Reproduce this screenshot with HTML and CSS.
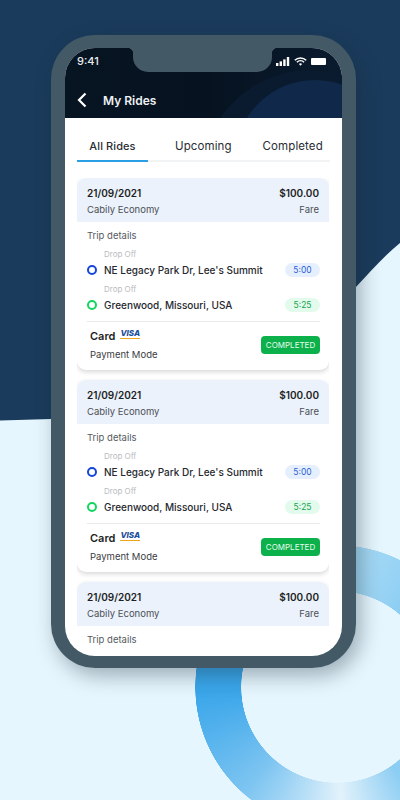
FILE: index.html
```html
<!DOCTYPE html>
<html lang="en">
<head>
  <meta charset="UTF-8" />
  <title>My Rides</title>
  <link rel="stylesheet" href="styles.css">
</head>
<body>

  <svg class="backdrop" width="400" height="800" viewBox="0 0 400 800">
    <path d="M0 0H400V243C385 255 370 272 356 287C300 345 200 419 51 419L0 420.5Z" fill="#1b3b5c" />
  </svg>
  <div class="ring"></div>

  <div class="phone">
    <div class="screen">
      <div class="notch"></div>

      <header class="app-header">
        <svg class="header-art" width="277" height="70" viewBox="0 0 277 70">
          <circle cx="245" cy="130" r="108" fill="#0a1b2f" />
          <circle cx="250" cy="112" r="80" fill="#10294a" />
        </svg>
        <div class="status-bar">
          <span class="clock">9:41</span>
          <span class="status-icons">
            <svg width="14" height="9" viewBox="0 0 14 9" fill="#fff">
              <rect x="0" y="6" width="2.4" height="3" />
              <rect x="3.6" y="4.4" width="2.4" height="4.6" />
              <rect x="7.2" y="2.4" width="2.4" height="6.6" />
              <rect x="10.8" y="0" width="2.4" height="9" />
            </svg>
            <svg width="13" height="9" viewBox="0 0 13 9" fill="none" stroke="#fff" stroke-width="1.5">
              <path d="M.8 3.2a8.2 8.2 0 0 1 11.4 0" />
              <path d="M2.9 5.2a5.2 5.2 0 0 1 7.2 0" />
              <path d="M6.5 8.8 4.9 7a2.3 2.3 0 0 1 3.2 0Z" fill="#fff" stroke="none" />
            </svg>
            <span class="battery"></span>
          </span>
        </div>
        <div class="title-row">
          <svg width="10" height="16" viewBox="0 0 10 16" fill="none" stroke="#fff" stroke-width="2.2">
            <path d="M8.5 1.5 2 8l6.5 6.5" />
          </svg>
          <h1>My Rides</h1>
        </div>
      </header>

      <nav class="tabs">
        <a class="tab active">All Rides</a>
        <a class="tab">Upcoming</a>
        <a class="tab">Completed</a>
      </nav>

      <div class="ride-list">
        <section class="ride-card">
          <div class="ride-head">
            <div class="head-row"><strong>21/09/2021</strong><strong>$100.00</strong></div>
            <div class="head-row sub"><span>Cabily Economy</span><span>Fare</span></div>
          </div>
          <div class="ride-body">
            <p class="trip-title">Trip details</p>
            <div class="stop">
              <span class="drop-label">Drop Off</span>
              <div class="stop-row">
                <i class="dot dot-blue"></i>
                <span class="address">NE Legacy Park Dr, Lee's Summit</span>
                <span class="time time-blue">5:00</span>
              </div>
            </div>
            <div class="stop">
              <span class="drop-label">Drop Off</span>
              <div class="stop-row">
                <i class="dot dot-green"></i>
                <span class="address">Greenwood, Missouri, USA</span>
                <span class="time time-green">5:25</span>
              </div>
            </div>
            <div class="pay-row">
              <div>
                <div class="card-line"><b>Card</b><span class="visa">VISA</span></div>
                <div class="pay-mode">Payment Mode</div>
              </div>
              <span class="status-badge">COMPLETED</span>
            </div>
          </div>
        </section>

        <section class="ride-card">
          <div class="ride-head">
            <div class="head-row"><strong>21/09/2021</strong><strong>$100.00</strong></div>
            <div class="head-row sub"><span>Cabily Economy</span><span>Fare</span></div>
          </div>
          <div class="ride-body">
            <p class="trip-title">Trip details</p>
            <div class="stop">
              <span class="drop-label">Drop Off</span>
              <div class="stop-row">
                <i class="dot dot-blue"></i>
                <span class="address">NE Legacy Park Dr, Lee's Summit</span>
                <span class="time time-blue">5:00</span>
              </div>
            </div>
            <div class="stop">
              <span class="drop-label">Drop Off</span>
              <div class="stop-row">
                <i class="dot dot-green"></i>
                <span class="address">Greenwood, Missouri, USA</span>
                <span class="time time-green">5:25</span>
              </div>
            </div>
            <div class="pay-row">
              <div>
                <div class="card-line"><b>Card</b><span class="visa">VISA</span></div>
                <div class="pay-mode">Payment Mode</div>
              </div>
              <span class="status-badge">COMPLETED</span>
            </div>
          </div>
        </section>

        <section class="ride-card">
          <div class="ride-head">
            <div class="head-row"><strong>21/09/2021</strong><strong>$100.00</strong></div>
            <div class="head-row sub"><span>Cabily Economy</span><span>Fare</span></div>
          </div>
          <div class="ride-body">
            <p class="trip-title">Trip details</p>
          </div>
        </section>
      </div>
    </div>
  </div>

</body>
</html>
```

FILE: styles.css
```css
html, body {
  height: 100%;
}

body {
  font-family: 'Inter', 'Liberation Sans', sans-serif;
  background-color: #e6f6fe;
  color: #1d1f24;
  margin: 0;
  width: 400px;
  height: 800px;
  overflow: hidden;
  position: relative;
}

.backdrop {
  position: absolute;
  top: 0;
  left: 0;
}

/* ring centre is at 142px 142px of this box, the box stops at the frame edge */
.ring {
  position: absolute;
  top: 545px;
  left: 195px;
  width: 205px;
  height: 255px;
  background: conic-gradient(at 142px 142px, #a8dbf6 8deg, #8ccdf3 40deg, #8ccdf3 145deg, #e2f2fb 178deg, #7cc4f1 222deg, #3aa6ea 268deg, #3aa6ea 340deg, #a8dbf6 368deg);
  -webkit-mask: radial-gradient(circle at 142px 142px, transparent 95.5px, #000 96px, #000 141.5px, transparent 142px);
  mask: radial-gradient(circle at 142px 142px, transparent 95.5px, #000 96px, #000 141.5px, transparent 142px);
}

.phone {
  position: relative;
  box-sizing: border-box;
  width: 305px;
  height: 633px;
  margin: 35px 0 0 51px;
  padding: 13px 14px 12px;
  background-color: #435a66;
  border-radius: 44px;
  box-shadow: 5px 8px 20px rgba(20, 40, 55, 0.35);
}

.screen {
  position: relative;
  display: flex;
  flex-direction: column;
  height: 100%;
  background-color: #fff;
  border-radius: 30px;
  overflow: hidden;
}

.notch {
  position: absolute;
  top: 0;
  left: 68px;
  z-index: 2;
  width: 139px;
  height: 24px;
  background-color: #435a66;
  border-radius: 0 0 15px 15px;
}

/* little flares where the notch meets the bezel */
.notch::before,
.notch::after {
  content: '';
  position: absolute;
  top: 0;
  width: 6px;
  height: 6px;
}

.notch::before {
  left: -6px;
  background: radial-gradient(circle at 0 100%, transparent 6px, #435a66 6.5px);
}

.notch::after {
  right: -6px;
  background: radial-gradient(circle at 100% 100%, transparent 6px, #435a66 6.5px);
}

.app-header {
  position: relative;
  flex: 0 0 70px;
  background: linear-gradient(90deg, #071421, #06121f 50%, #0a1b2e);
  color: #fff;
}

.header-art {
  position: absolute;
  top: 0;
  left: 0;
}

.status-bar {
  position: relative;
  display: flex;
  justify-content: space-between;
  align-items: center;
  height: 26px;
  padding: 0 16px 0 12px;
}

.clock {
  font-size: 11px;
  font-weight: 500;
  color: #e8ecef;
}

.status-icons {
  display: flex;
  align-items: center;
  gap: 4px;
}

.battery {
  width: 15px;
  height: 7px;
  background-color: #fff;
  border-radius: 1px;
}

.title-row {
  position: relative;
  display: flex;
  align-items: center;
  gap: 16px;
  padding: 18px 0 0 12px;
}

h1 {
  margin: 0;
  font-size: 12px;
  font-weight: 600;
  color: #eef1f4;
}

.tabs {
  flex: none;
  display: flex;
  margin: 18px 12px 0;
  border-bottom: 2px solid #f2f3f5;
}

.tab {
  margin-bottom: -2px;
  padding: 3px 0 7px;
  font-size: 11.5px;
  letter-spacing: 0.1px;
  line-height: 14px;
  color: #2a2d33;
}

.tab:nth-child(2) {
  margin-right: 31px;
}

.tab.active {
  width: 71px;
  margin-right: 27px;
  box-sizing: border-box;
  text-align: center;
  font-size: 11px;
  font-weight: 500;
  border-bottom: 2px solid #2a9fe6;
}

.ride-list {
  flex: 1;
  min-height: 0;
  margin: 16px 13px 10px 12px;
  overflow: hidden;
  display: flex;
  flex-direction: column;
  gap: 11px;
}

.ride-card {
  flex: none;
  margin: 0 0 -1px;
  background-color: #fff;
  border-radius: 9px;
  box-shadow: 0 2px 5px rgba(0, 0, 0, 0.16);
  overflow: hidden;
}

.ride-head {
  box-sizing: border-box;
  height: 44px;
  padding: 8px 10px 0;
  background-color: #ebf2fb;
}

.head-row {
  display: flex;
  justify-content: space-between;
  font-size: 10px;
  line-height: 14px;
}

.head-row strong {
  font-weight: 600;
}

.head-row.sub {
  margin-top: 3px;
  font-size: 9.5px;
  color: #4b4f57;
}

.ride-body {
  padding: 7px 9px 0 10px;
}

.trip-title {
  margin: 0 0 5px;
  font-size: 9.5px;
  line-height: 14px;
  color: #555a62;
}

.stop {
  height: 35px;
}

.drop-label {
  display: block;
  padding-left: 17px;
  font-size: 8px;
  line-height: 12px;
  color: #b9bcc1;
}

.stop-row {
  display: flex;
  align-items: center;
  margin-top: 2px;
  height: 16px;
}

.dot {
  box-sizing: border-box;
  flex: none;
  width: 10px;
  height: 10px;
  margin-right: 7px;
  border-radius: 50%;
  border: 2.4px solid;
}

.dot-blue {
  border-color: #1646d8;
}

.dot-green {
  border-color: #12d65f;
}

.address {
  flex: 1;
  font-size: 10px;
  font-weight: 500;
  color: #26282e;
}

.time {
  width: 35px;
  height: 14px;
  border-radius: 7px;
  font-size: 8.5px;
  line-height: 14px;
  text-align: center;
}

.time-blue {
  background-color: #e6effd;
  color: #2a5fd8;
}

.time-green {
  background-color: #e3fbec;
  color: #17a34f;
}

.pay-row {
  display: flex;
  justify-content: space-between;
  align-items: flex-start;
  margin-top: 3px;
  padding: 7px 0 8px 3px;
  border-top: 1px solid #e8e9eb;
}

.card-line {
  display: flex;
  align-items: flex-start;
  gap: 5px;
  height: 14px;
}

.card-line b {
  font-size: 11px;
  line-height: 14px;
  font-weight: 600;
}

.visa {
  height: 9px;
  border-bottom: 1px solid #eda51f;
  font-size: 8px;
  line-height: 8px;
  font-weight: 800;
  font-style: italic;
  color: #1c4f9c;
}

.pay-mode {
  margin-top: 5px;
  font-size: 9.5px;
  line-height: 14px;
  color: #3a3d44;
}

.status-badge {
  margin-top: 7px;
  width: 59px;
  height: 18px;
  background-color: #0db14b;
  border-radius: 4px;
  font-size: 8px;
  line-height: 18px;
  text-align: center;
  color: #e6fbef;
}
```
